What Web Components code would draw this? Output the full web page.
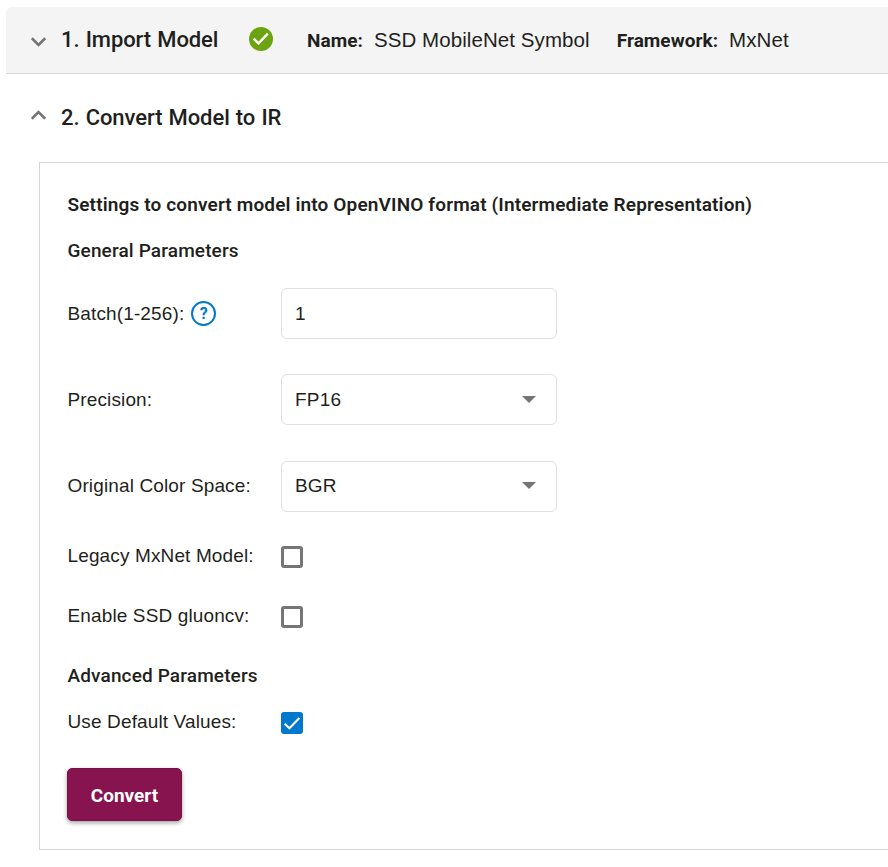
<!DOCTYPE html>
<html lang="en">
<head>
<meta charset="utf-8">
<title>Import Model</title>
<style>
body{margin:0;background:#fff;color:#1f1f20;font:19px/25px "Liberation Sans",Arial,sans-serif;overflow:hidden}
</style>
</head>
<body>
<model-wizard></model-wizard>
<script>
const define = (name, html) => customElements.define(name, class extends HTMLElement {
  constructor() {
    super();
    this.attachShadow({mode: 'open'}).innerHTML = html;
  }
});

define('step-chevron', `<style>:host{display:block;width:16px;height:10px}:host([up]) svg{transform:scaleY(-1)}svg{display:block}</style>
<svg width="16" height="10" viewBox="0 0 16 10"><path d="M.8 1.2 7.5 7.9 14.2 1.2" fill="none" stroke="#757575" stroke-width="2.7"/></svg>`);

define('status-ok', `<style>:host{display:block;width:24px;height:24px}svg{display:block}</style>
<svg width="24" height="24" viewBox="0 0 24 24"><circle cx="12" cy="12" r="12" fill="#6ca310"/><path d="M4.6 11.7 9.5 16.3 18.8 6.6" fill="none" stroke="#fff" stroke-width="2.4"/></svg>`);

define('step-title', `<style>:host{display:block;font:500 22px/26px Roboto,sans-serif;word-spacing:.8px;letter-spacing:-.08px;white-space:nowrap}</style><slot></slot>`);

define('model-fact', `<style>:host{display:flex;align-items:baseline;gap:11px;white-space:nowrap}
b{font:700 19px/26px Roboto,sans-serif;letter-spacing:.05px}span{font-size:20.5px;line-height:26px;letter-spacing:.08px}</style>
<b><slot name="label"></slot></b><span><slot></slot></span>`);

define('section-title', `<style>:host{display:block;padding-left:.5px;font:500 19px/25px Roboto,sans-serif;letter-spacing:.14px;white-space:nowrap}
:host([strong]){font-weight:600;letter-spacing:.145px}</style><slot></slot>`);

define('help-badge', `<style>:host{display:block;box-sizing:border-box;width:25px;height:25px;border:2px solid #0078cc;border-radius:50%;color:#0078cc;
font:700 16px/21px Roboto,sans-serif;letter-spacing:0;text-align:center}</style>?`);

define('form-row', `<style>:host{display:grid;grid-template-columns:214px auto;justify-content:start;align-items:center}
div{display:flex;align-items:center;gap:7px;padding-left:.5px;letter-spacing:.13px;white-space:nowrap;line-height:var(--line,25px);padding-bottom:var(--lift,0)}</style>
<div><slot name="label"></slot><slot name="help"></slot></div><slot></slot>`);

define('field-box', `<style>:host{display:flex;box-sizing:border-box;width:276px;height:51px;border:1px solid #dfdfdf;border-radius:6px;padding:0 20px var(--lift,0) 13px;align-items:center;justify-content:space-between;letter-spacing:.19px}
svg{display:none}:host([select]) svg{display:block}</style>
<span><slot></slot></span><svg width="14" height="7" viewBox="0 0 14 7"><path d="M0 0h14L7 7z" fill="#757575"/></svg>`);

define('check-box', `<style>:host{display:block;box-sizing:border-box;width:22px;height:22px;border:3px solid #757575;border-radius:3px}
svg{display:none}:host([checked]){border:0;background:#0078cc}:host([checked]) svg{display:block}</style>
<svg width="22" height="22" viewBox="0 0 22 22"><path d="M3.7 11.7 8.4 16.2 18.4 6" fill="none" stroke="#fff" stroke-width="2.1"/></svg>`);

define('action-button', `<style>:host{display:block}button{display:block;width:115px;height:53px;margin:0;padding:2px 0 0;border:1px solid #741244;border-radius:5px;background:#88144f;color:#fff;
font:700 19px/49px Roboto,sans-serif;box-shadow:0 2px 4px rgba(0,0,0,.36)}</style><button><slot></slot></button>`);

define('model-wizard', `<style>
:host{display:block;padding:7px 0 0 6px}
header{display:flex;align-items:center;height:66px;border-bottom:1px solid #d2d6d7;background:#f4f4f4;border-radius:6px 0 0 0;padding-left:25px}
header step-chevron{margin:4px 14px 0 0}
header step-title{width:187.5px}
header status-ok{margin:-2px 34.5px 0 0}
header model-fact+model-fact{margin-left:27px}
.second{display:flex;align-items:center;height:88px;padding-left:25px}
.second step-chevron{margin:-6px 14px 0 0}
main{margin-left:33px;border:1px solid #d2d6d7;border-right:0;padding:29px 0 28px 27px}
.general{margin-top:21px}.batch{margin-top:25px}.precision{margin-top:35px}
.color{margin-top:36px;--lift:2px}
.legacy{margin-top:34px}.ssd{margin-top:38px}
.legacy,.ssd,.defaults{height:22px;--lift:3px;--line:19px}
.advanced{margin-top:35px}.defaults{margin-top:24px}action-button{margin-top:34px}
</style>
<header><step-chevron></step-chevron><step-title>1. Import Model</step-title><status-ok></status-ok>
<model-fact><span slot="label">Name:</span>SSD MobileNet Symbol</model-fact><model-fact><span slot="label">Framework:</span>MxNet</model-fact></header>
<div class="second"><step-chevron up></step-chevron><step-title>2. Convert Model to IR</step-title></div>
<main>
<section-title strong>Settings to convert model into OpenVINO format (Intermediate Representation)</section-title>
<section-title class="general">General Parameters</section-title>
<form-row class="batch"><span slot="label">Batch(1-256):</span><help-badge slot="help"></help-badge><field-box>1</field-box></form-row>
<form-row class="precision"><span slot="label">Precision:</span><field-box select>FP16</field-box></form-row>
<form-row class="color"><span slot="label">Original Color Space:</span><field-box select>BGR</field-box></form-row>
<form-row class="legacy"><span slot="label">Legacy MxNet Model:</span><check-box></check-box></form-row>
<form-row class="ssd"><span slot="label">Enable SSD gluoncv:</span><check-box></check-box></form-row>
<section-title class="advanced">Advanced Parameters</section-title>
<form-row class="defaults"><span slot="label">Use Default Values:</span><check-box checked></check-box></form-row>
<action-button>Convert</action-button>
</main>`);
</script>
</body>
</html>
